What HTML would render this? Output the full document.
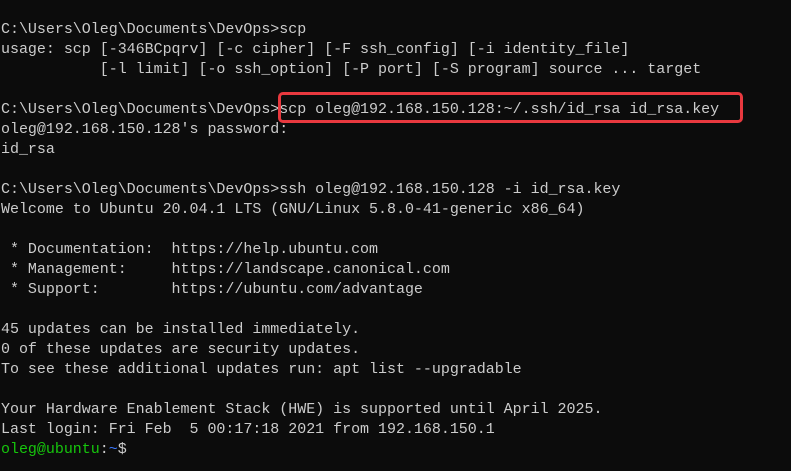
<!DOCTYPE html>
<html><head><meta charset="utf-8"><style>
html,body{margin:0;padding:0;background:#0c0c0c;}
body{width:791px;height:471px;overflow:hidden;position:relative;}
pre{margin:0;position:absolute;left:1px;top:20px;font-family:"Liberation Mono",monospace;font-size:15px;letter-spacing:-0.025px;line-height:20px;color:#cccccc;white-space:pre;}
.g{color:#16c60c}.b{color:#3b78ff}
.box{position:absolute;left:278px;top:92px;width:459px;height:25px;border:3px solid #e8393f;border-radius:5px;}
</style></head><body>
<pre>C:\Users\Oleg\Documents\DevOps&gt;scp
usage: scp [-346BCpqrv] [-c cipher] [-F ssh_config] [-i identity_file]
           [-l limit] [-o ssh_option] [-P port] [-S program] source ... target

C:\Users\Oleg\Documents\DevOps&gt;scp oleg@192.168.150.128:~/.ssh/id_rsa id_rsa.key
oleg@192.168.150.128's password:
id_rsa

C:\Users\Oleg\Documents\DevOps&gt;ssh oleg@192.168.150.128 -i id_rsa.key
Welcome to Ubuntu 20.04.1 LTS (GNU/Linux 5.8.0-41-generic x86_64)

 * Documentation:  https://help.ubuntu.com
 * Management:     https://landscape.canonical.com
 * Support:        https://ubuntu.com/advantage

45 updates can be installed immediately.
0 of these updates are security updates.
To see these additional updates run: apt list --upgradable

Your Hardware Enablement Stack (HWE) is supported until April 2025.
Last login: Fri Feb  5 00:17:18 2021 from 192.168.150.1
<span class="g">oleg@ubuntu</span>:<span class="b">~</span>$</pre>
<div class="box"></div>
</body></html>
